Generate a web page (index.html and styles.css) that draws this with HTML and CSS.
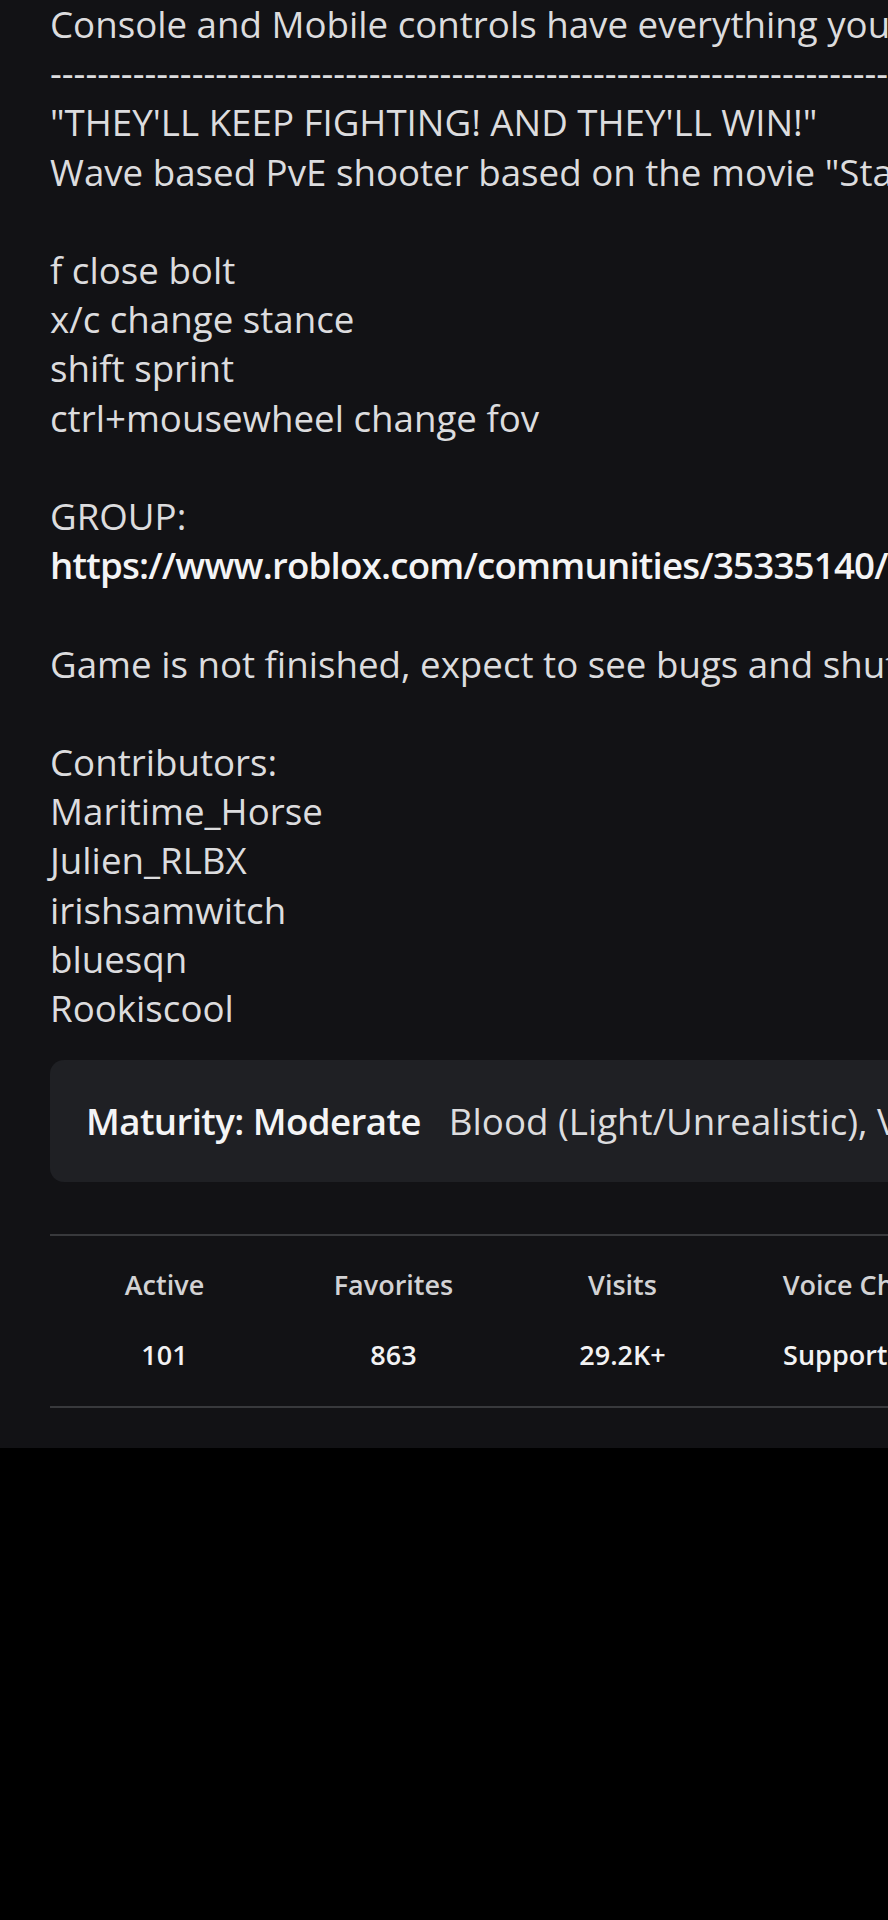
FILE: index.html
```html
<!DOCTYPE html>
<html lang="en">
<head>
<meta charset="utf-8">
<title>Game description</title>
<link rel="stylesheet" href="styles.css">
</head>
<body>
<main class="page">
  <section class="desc">
    <p class="line">Console and Mobile controls have everything you need to play the game</p>
    <p class="line dashes">----------------------------------------------------------------------------------------------------------</p>
    <p class="line">"THEY'LL KEEP FIGHTING! AND THEY'LL WIN!"</p>
    <p class="line">Wave based PvE shooter based on the movie "Starship Troopers"</p>
    <p class="line blank">&nbsp;</p>
    <p class="line">f close bolt</p>
    <p class="line">x/c change stance</p>
    <p class="line">shift sprint</p>
    <p class="line">ctrl+mousewheel change fov</p>
    <p class="line blank">&nbsp;</p>
    <p class="line">GROUP:</p>
    <p class="line"><a class="link" href="#">https://www.roblox.com/communities/35335140/</a></p>
    <p class="line blank">&nbsp;</p>
    <p class="line">Game is not finished, expect to see bugs and shutdowns</p>
    <p class="line blank">&nbsp;</p>
    <p class="line">Contributors:</p>
    <p class="line">Maritime_Horse</p>
    <p class="line">Julien_RLBX</p>
    <p class="line">irishsamwitch</p>
    <p class="line">bluesqn</p>
    <p class="line">Rookiscool</p>
  </section>

  <section class="maturity">
    <span class="maturity-label">Maturity: Moderate</span>
    <span class="maturity-desc">Blood (Light/Unrealistic), Violence (Mild)</span>
  </section>

  <section class="stats">
    <div class="stat"><div class="stat-label">Active</div><div class="stat-value">101</div></div>
    <div class="stat"><div class="stat-label">Favorites</div><div class="stat-value">863</div></div>
    <div class="stat"><div class="stat-label">Visits</div><div class="stat-value">29.2K+</div></div>
    <div class="stat"><div class="stat-label">Voice Chat</div><div class="stat-value">Supported</div></div>
  </section>
</main>
</body>
</html>
```

FILE: styles.css
```css
html, body {
  margin: 0;
  padding: 0;
  background: #000000;
  overflow: hidden;
}

.page {
  width: 888px;
  height: 1448px;
  overflow: hidden;
  background: #121215;
  box-sizing: border-box;
  padding-left: 50px;
  font-family: "Open Sans", "Noto Sans", sans-serif;
  color: #dcdcde;
}

.desc {
  width: 1400px;
}

.line {
  margin: 0;
  font-size: 36.7px;
  line-height: 49.2px;
  white-space: nowrap;
}

.link {
  color: #f4f4f5;
  font-weight: 600;
  letter-spacing: -0.8px;
  text-decoration: none;
}

.maturity {
  margin-top: 27px;
  width: 1200px;
  height: 122px;
  box-sizing: border-box;
  background: #1f2024;
  border-radius: 14px;
  display: flex;
  align-items: center;
  gap: 28px;
  padding-left: 36px;
  font-size: 36.7px;
  white-space: nowrap;
}

.maturity-label {
  font-weight: 600;
  letter-spacing: -0.6px;
  color: #f4f4f5;
}

.maturity-desc {
  color: #dcdcde;
}

.stats {
  margin-top: 52px;
  width: 1200px;
  border-top: 2px solid #38393c;
  border-bottom: 2px solid #38393c;
  display: grid;
  grid-template-columns: repeat(5, 229px);
  padding: 30px 0 33px;
}

.stat {
  display: flex;
  flex-direction: column;
  align-items: center;
  gap: 33px;
  white-space: nowrap;
}

.stat-label {
  font-size: 27px;
  line-height: 37px;
  font-weight: 600;
  color: #d2d2d4;
}

.stat-value {
  font-size: 27px;
  line-height: 37px;
  font-weight: 600;
  color: #f2f2f3;
}
```
